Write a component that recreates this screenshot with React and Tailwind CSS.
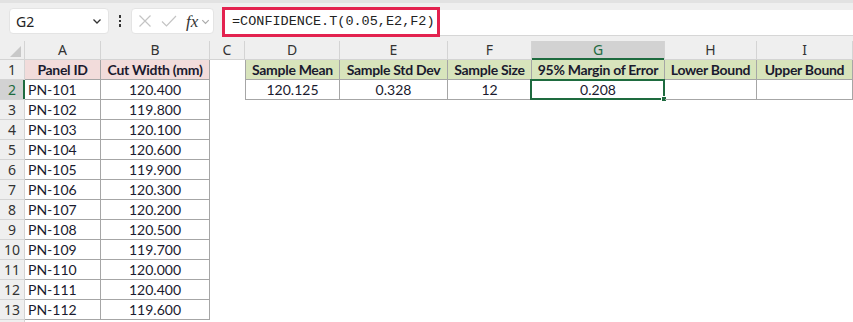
import React from 'react';

const COLS = [
  { key: 'A', w: 76 },
  { key: 'B', w: 109 },
  { key: 'C', w: 35 },
  { key: 'D', w: 95 },
  { key: 'E', w: 108 },
  { key: 'F', w: 84 },
  { key: 'G', w: 133 },
  { key: 'H', w: 92 },
  { key: 'I', w: 96 },
];

const PANELS = [
  ['PN-101', '120.400'], ['PN-102', '119.800'], ['PN-103', '120.100'], ['PN-104', '120.600'],
  ['PN-105', '119.900'], ['PN-106', '120.300'], ['PN-107', '120.200'], ['PN-108', '120.500'],
  ['PN-109', '119.700'], ['PN-110', '120.000'], ['PN-111', '120.400'], ['PN-112', '119.600'],
];

const STATS_HEAD = ['Sample Mean', 'Sample Std Dev', 'Sample Size', '95% Margin of Error', 'Lower Bound', 'Upper Bound'];
const STATS_ROW = ['120.125', '0.328', '12', '0.208', '', ''];

const cellFont = { fontFamily: 'Lato, Carlito, "Liberation Sans", sans-serif' };
const uiFont = { fontFamily: '"Noto Sans", "Open Sans", sans-serif' };

function Chevron({ className }) {
  return (
    <svg viewBox="0 0 12 12" className={className} fill="none" stroke="currentColor" strokeWidth="1.3">
      <path d="M2.5 4.5 L6 8 L9.5 4.5" />
    </svg>
  );
}

function Toolbar() {
  return (
    <div className="h-[41px] bg-[#efefef] border-t-[3px] border-[#e2e2e2] flex items-start pt-[5px] pl-[9px]">
      <div className="w-[100px] h-[26px] bg-white rounded-[4px] border border-[#e4e4e4] flex items-center justify-between pl-[6px] pr-[5px] text-[14px] text-[#222]" style={uiFont}>
        <span>G2</span>
        <Chevron className="w-[12px] h-[12px] text-[#333]" />
      </div>
      <div className="w-[22px] h-[26px] flex flex-col items-center justify-center gap-[2px]">
        <span className="w-[2.5px] h-[2.5px] bg-[#333]" />
        <span className="w-[2.5px] h-[2.5px] bg-[#333]" />
        <span className="w-[2.5px] h-[2.5px] bg-[#333]" />
      </div>
      <div className="w-[83px] h-[26px] bg-white rounded-[4px] border border-[#e4e4e4] flex items-center pl-[6px] text-[#c4c4c4]">
        <svg viewBox="0 0 14 14" className="w-[14px] h-[14px]" fill="none" stroke="currentColor" strokeWidth="1.2">
          <path d="M1.5 1.5 L12.5 12.5 M12.5 1.5 L1.5 12.5" />
        </svg>
        <svg viewBox="0 0 16 14" className="w-[16px] h-[14px] ml-[9px]" fill="none" stroke="currentColor" strokeWidth="1.2">
          <path d="M1 7.5 L5.5 12 L15 2" />
        </svg>
        <span className="ml-[9px] text-[17px] italic text-[#333] leading-none" style={{ fontFamily: '"Liberation Serif", serif' }}>fx</span>
        <Chevron className="w-[11px] h-[11px] ml-[2px] text-[#aaa]" />
      </div>
      <div className="ml-[8px] -mt-[1px] flex-1 flex items-start">
        <div className="w-[218px] h-[30px] border-[3px] border-[#e3224f] bg-white flex items-center pl-[7px] text-[13.5px] text-[#222]" style={{ fontFamily: '"Liberation Mono", monospace' }}>
          =CONFIDENCE.T(0.05,E2,F2)
        </div>
        <div className="flex-1 h-[26px] mt-[3px] bg-white border-b border-[#d6d6d6]" />
      </div>
    </div>
  );
}

function ColHeaders() {
  return (
    <div className="flex h-[19px] bg-[#efefef] border-b border-[#d4d4d4] text-[14px] text-[#333]" style={uiFont}>
      <div className="w-[25px] shrink-0 border-r border-[#d4d4d4] relative">
        <svg viewBox="0 0 12 12" className="absolute right-[3px] bottom-[2px] w-[11px] h-[11px]">
          <path d="M12 0 L12 12 L0 12 Z" fill="#c8c8c8" />
        </svg>
      </div>
      {COLS.map(c => (
        <div key={c.key} style={{ width: c.w }}
          className={`shrink-0 flex items-center justify-center border-r border-[#d4d4d4] leading-none relative ${c.key === 'G' ? 'bg-[#d2d2d2] text-[#1e6b3f]' : ''}`}>
          {c.key}
          {c.key === 'G' && <span className="absolute left-0 right-0 -bottom-[1px] h-[2px] bg-[#1e6b3f]" />}
        </div>
      ))}
    </div>
  );
}

function RowHead({ n, label = true }) {
  const sel = n === 2;
  return (
    <div className={`w-[25px] shrink-0 flex items-center justify-center border-r border-b border-[#d4d4d4] text-[14px] relative ${sel ? 'bg-[#d2d2d2] text-[#1e6b3f]' : 'bg-[#efefef] text-[#333]'}`}
      style={uiFont}>
      {label ? n : null}
      {sel && <span className="absolute top-0 bottom-0 -right-[1px] w-[2px] bg-[#1e6b3f]" />}
    </div>
  );
}

function Cell({ w, children, bordered, left, bg, bold, align = 'center', selected }) {
  return (
    <div style={{ width: w, ...cellFont }}
      className={`shrink-0 h-full flex items-center text-[14px] text-[#1a1a2e] relative whitespace-nowrap overflow-visible
        ${bordered ? 'border-r border-b border-[#a6a6a6]' : ''} ${left ? 'border-l border-[#a6a6a6]' : ''}
        ${bg || ''} ${bold ? 'font-bold tracking-[-0.3px]' : ''} ${align === 'left' ? 'justify-start pl-[3px]' : 'justify-center'}`}>
      {children}
      {selected && (
        <div className="absolute -left-[2px] -top-[1px] -right-[1px] -bottom-[1px] border-2 border-[#1e6b3f]">
          <span className="absolute -right-[4px] -bottom-[4px] w-[6px] h-[6px] bg-[#1e6b3f] border border-white" />
        </div>
      )}
    </div>
  );
}

function Row({ n }) {
  const w = COLS.map(c => c.w);
  const panel = PANELS[n - 2];
  return (
    <div className="flex h-[20px]">
      <RowHead n={n} label={n < 14} />
      {n === 1 ? (
        <>
          <Cell w={w[0]} bordered bg="bg-[#f2dcdb]" bold>Panel ID</Cell>
          <Cell w={w[1]} bordered bg="bg-[#f2dcdb]" bold>Cut Width (mm)</Cell>
        </>
      ) : panel ? (
        <>
          <Cell w={w[0]} bordered align="left">{panel[0]}</Cell>
          <Cell w={w[1]} bordered>{panel[1]}</Cell>
        </>
      ) : (
        <>
          <Cell w={w[0]} />
          <Cell w={w[1]} />
        </>
      )}
      <Cell w={w[2]} />
      {n === 1 && STATS_HEAD.map((t, i) => (
        <Cell key={t} w={w[3 + i]} bordered left={i === 0} bg="bg-[#d8e4bc]" bold>{t}</Cell>
      ))}
      {n === 2 && STATS_ROW.map((t, i) => (
        <Cell key={i} w={w[3 + i]} bordered left={i === 0} selected={i === 3}>{t}</Cell>
      ))}
    </div>
  );
}

export default function App() {
  const rows = Array.from({ length: 14 }, (_, i) => i + 1);
  return (
    <div className="w-[853px] h-[322px] bg-white overflow-hidden">
      <Toolbar />
      <ColHeaders />
      {rows.map(n => <Row key={n} n={n} />)}
    </div>
  );
}
